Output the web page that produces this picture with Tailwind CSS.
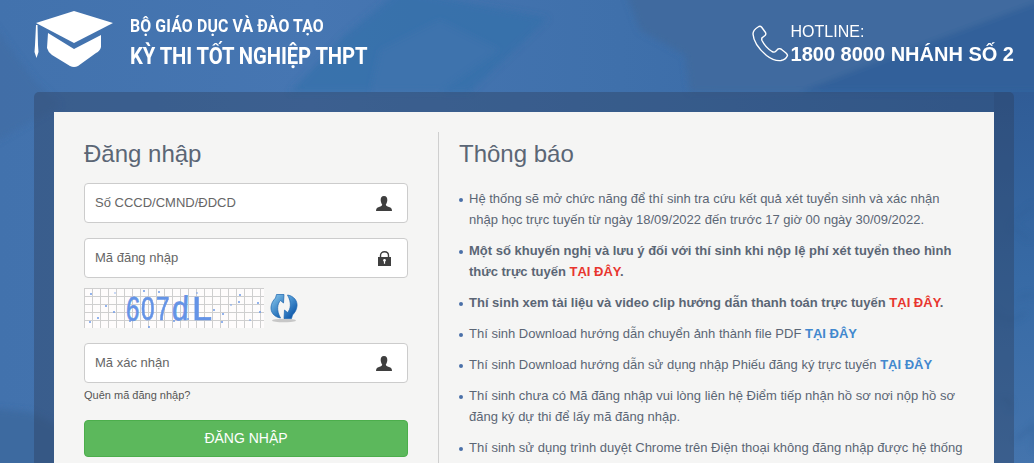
<!DOCTYPE html>
<html lang="en">
  <head>
    <meta charset="UTF-8" />
    <meta name="viewport" content="width=device-width, initial-scale=1.0" />
    <title>Đăng nhập</title>
    <script src="https://cdn.jsdelivr.net/npm/@tailwindcss/browser@4"></script>
  </head>
  <body class="relative h-[463px] overflow-hidden bg-[#4474b0] font-['Liberation_Sans',Arial,sans-serif] text-[#5b6675]">
    <!-- background photo stand-in -->
    <svg class="absolute inset-0 h-full w-full" viewBox="0 0 1034 463" preserveAspectRatio="none">
      <defs>
        <linearGradient id="bg" x1="0" y1="0" x2="1" y2="0">
          <stop offset="0" stop-color="#4272ad" />
          <stop offset="0.3" stop-color="#4676b2" />
          <stop offset="0.6" stop-color="#3f70ab" />
          <stop offset="1" stop-color="#3465a2" />
        </linearGradient>
        <linearGradient id="edge" x1="0" y1="0" x2="0" y2="1">
          <stop offset="0" stop-color="#305c96" />
          <stop offset="0.5" stop-color="#376aa5" />
          <stop offset="1" stop-color="#4474ad" />
        </linearGradient>
        <filter id="soft" x="-10%" y="-10%" width="120%" height="120%"><feGaussianBlur stdDeviation="3" /></filter>
      </defs>
      <rect width="1034" height="463" fill="url(#bg)" />
      <g filter="url(#soft)">
        <path d="M-10 20 L-10 145 L60 105 L34 80Z" fill="#3f6ca4" opacity="0.6" />
        <path d="M400 -10 L548 18 L470 92 L290 92 L345 35Z" fill="#3471aa" opacity="0.7" />
        <path d="M380 50 L440 20 L500 50 L440 92 L370 92Z" fill="#4475af" opacity="0.5" />
        <path d="M625 -10 L1044 -10 L1044 92 L690 92 L685 55 L640 30Z" fill="#3f6a9f" />
        <path d="M800 92 Q880 60 1044 0 L1044 92Z" fill="#33609a" />
        <path d="M-10 408 L30 412 L100 445 L100 473 L-10 473Z" fill="#3e6aa0" />
      </g>
      <rect x="994" y="92" width="40" height="371" fill="url(#edge)" />
      <g fill="none" stroke="#2f5e95" stroke-width="3" opacity="0.5" filter="url(#soft)">
        <path d="M994 310 Q1008 328 1026 312 M1014 220 L1034 205 M1010 225 L1030 240 M1018 300 Q1026 292 1034 296 M1000 400 Q1012 395 1010 410 M1016 440 L1034 425 L1034 450" />
      </g>
    </svg>

    <header class="relative flex h-[92px] items-start justify-between pl-[34px] pr-[20px]">
      <div class="flex items-start">
        <svg class="mt-[11px] h-[57px] w-[80px]" viewBox="0 0 80 57" fill="#fff">
          <path d="M40 0 L79 12 L40 32 L2 12 Z" />
          <path d="M14 22 L40 38 L67 24 L67 36 Q66 40 62 42 L44 55 Q40 57 36 55 L18 44 Q14 41 13 37 Z" />
          <path d="M2 14 L3.500 14 L4 34 L4.500 41 L2.500 47 L0.500 41 L1 34 Z" />
        </svg>
        <div class="ml-[16px] flex origin-left scale-x-[0.88] flex-col whitespace-nowrap font-['Roboto',sans-serif] text-white">
          <span class="mt-[15px] text-[18px] font-bold leading-[22px] tracking-[0.15px]">BỘ GIÁO DỤC VÀ ĐÀO TẠO</span>
          <span class="mt-[6px] text-[23px] font-bold leading-[28px] tracking-[-0.1px]">KỲ THI TỐT NGHIỆP THPT</span>
        </div>
      </div>
      <div class="mt-[23px] flex items-start text-white">
        <svg class="mt-[2px] h-[37px] w-[37px]" viewBox="0 0 37 37" fill="none" stroke="#fff" stroke-width="1.400" stroke-linejoin="round">
          <path d="M6 2 C3.500 3.500 1 5.500 1 9 C1.500 17 8 25 14.500 30.500 C19 34 24 36 29 35.500 C32 35 34.500 33 35.500 30.500 C35.500 29.500 35 29 34 28 L29 24 C28 23.500 27 23.500 26 24 L23.500 26.500 C22.500 27.500 21 27 20 26.500 C16 24 12 19.500 10 15.500 C9.500 14 9.500 13 10.500 12.500 L13 10.500 C14 9.500 14 8.500 13.500 7.500 L9.500 2 C8.500 1 7.500 1 6 2 Z" />
        </svg>
        <div class="ml-[2px] flex flex-col">
          <span class="text-[16px] leading-[18px]">HOTLINE:</span>
          <span class="mt-[1px] text-[20px] font-bold leading-[24px]">1800 8000 NHÁNH SỐ 2</span>
        </div>
      </div>
    </header>

    <main class="relative ml-[34px] mr-[20px] h-[371px] rounded-t-[5px] bg-[#2d3f5d]/40 px-[20px] pt-[20px]">
      <div class="flex h-[351px] bg-[#f5f5f4]">
        <section class="w-[384px] shrink-0 pl-[30px] pr-[30px] pt-[28px]">
          <h2 class="text-[24px] leading-[28px] text-[#5b6675]">Đăng nhập</h2>

          <div class="mt-[15px] flex h-[40px] items-center justify-between rounded-[4px] border border-[#cccccc] bg-white pl-[10px] pr-[15px] text-[13px] text-[#666]">
            <span>Số CCCD/CMND/ĐDCD</span>
            <svg class="h-[15px] w-[16px]" viewBox="0 0 16 15" fill="#3f3f3f"><path d="M8 0 C10.500 0 11.500 2 11.300 4.500 C11.100 6.500 10.300 7.800 9.800 8.600 C9.800 9.800 11 10.300 13 11 C15 11.700 16 12.500 16 15 L0 15 C0 12.500 1 11.700 3 11 C5 10.300 6.200 9.800 6.200 8.600 C5.700 7.800 4.900 6.500 4.700 4.500 C4.500 2 5.500 0 8 0 Z" /></svg>
          </div>

          <div class="mt-[15px] flex h-[40px] items-center justify-between rounded-[4px] border border-[#cccccc] bg-white pl-[10px] pr-[15px] text-[13px] text-[#666]">
            <span>Mã đăng nhập</span>
            <svg class="h-[15px] w-[15px]" viewBox="0 0 15 15"><path d="M3.500 7 V4.500 C3.500 2 5.300 0.700 7.500 0.700 C9.700 0.700 11.500 2 11.500 4.500 V7" fill="none" stroke="#3f3f3f" stroke-width="1.400" /><path fill="#3f3f3f" fill-rule="evenodd" d="M1 6 H14 V15 H1 Z M7.500 8 A1.300 1.300 0 0 0 6.900 10.500 V12.800 H8.100 V10.500 A1.300 1.300 0 0 0 7.500 8 Z" /></svg>
          </div>

          <div class="mt-[10px] flex h-[40px] items-center">
            <div class="relative h-[40px] w-[180px] overflow-hidden bg-[#fefcfc] bg-[linear-gradient(#cfcfcf_1px,transparent_1px),linear-gradient(90deg,#cfcfcf_1px,transparent_1px)] bg-size-[8px_8px]">
              <svg class="absolute inset-0 h-full w-full" viewBox="0 0 180 40" fill="#6f9be8">
                <circle cx="7" cy="6" r="1" /><circle cx="14" cy="30" r="1" /><circle cx="22" cy="18" r="1" /><circle cx="30" cy="24" r="1" /><circle cx="31" cy="5" r="0.700" /><circle cx="46" cy="33" r="1" />
                <circle cx="47" cy="10" r="0.700" /><circle cx="60" cy="3" r="1" /><circle cx="75" cy="4" r="1" /><circle cx="113" cy="5" r="0.800" /><circle cx="138" cy="34" r="1" /><circle cx="130" cy="22" r="1" />
                <circle cx="139" cy="26" r="1" /><circle cx="147" cy="17" r="0.800" /><circle cx="155" cy="14" r="1" /><circle cx="156" cy="7" r="1" /><circle cx="174" cy="15" r="1" /><circle cx="176" cy="24" r="1" />
                <circle cx="90" cy="33" r="1" /><circle cx="104" cy="31" r="1" /><circle cx="120" cy="30" r="1" /><circle cx="65" cy="39" r="1" /><circle cx="6" cy="34" r="1" /><circle cx="166" cy="32" r="0.800" />
              </svg>
              <div class="absolute left-[42px] top-[3px] flex items-baseline text-[34px] leading-[34px] text-[#6493e6] [-webkit-text-stroke:0.7px_#6493e6]">
                <span class="inline-block w-[15px] origin-left scale-x-[0.72] rotate-[4deg]">6</span>
                <span class="inline-block w-[15px] origin-left scale-x-[0.72]">0</span>
                <span class="inline-block w-[16px] origin-left scale-x-[0.72]">7</span>
                <span class="inline-block w-[20px] origin-left scale-x-[0.88] -skew-x-[3deg]">d</span>
                <span class="inline-block origin-left scale-x-[1.06]">L</span>
              </div>
            </div>
            <svg class="ml-[5px] h-[30px] w-[30px]" viewBox="0 0 30 30">
              <defs>
                <linearGradient id="arrowLeft" x1="0" y1="0" x2="0.600" y2="1">
                  <stop offset="0" stop-color="#8fcdf0" />
                  <stop offset="1" stop-color="#1c68b4" />
                </linearGradient>
                <linearGradient id="arrowRight" x1="1" y1="1" x2="0.400" y2="0">
                  <stop offset="0" stop-color="#6db6e8" />
                  <stop offset="1" stop-color="#0d56a8" />
                </linearGradient>
              </defs>
              <ellipse cx="15" cy="27.500" rx="12" ry="1.800" fill="#9a9a9a" opacity="0.5" />
              <path fill="url(#arrowLeft)" stroke="#1a63ad" stroke-width="0.700" d="M7.500 1.500 L15 1.500 L14.500 10 L11.500 7.500 C8.500 10.500 7 17 11.500 25 C5 24 1.500 19 2 14 C2.300 10.500 4 7.500 6.500 5 Z" />
              <path fill="url(#arrowRight)" stroke="#1a63ad" stroke-width="0.700" transform="rotate(180 15 13.500)" d="M7.500 1.500 L15 1.500 L14.500 10 L11.500 7.500 C8.500 10.500 7 17 11.500 25 C5 24 1.500 19 2 14 C2.300 10.500 4 7.500 6.500 5 Z" />
            </svg>
          </div>

          <div class="mt-[15px] flex h-[40px] items-center justify-between rounded-[4px] border border-[#cccccc] bg-white pl-[10px] pr-[15px] text-[13px] text-[#666]">
            <span>Mã xác nhận</span>
            <svg class="h-[15px] w-[16px]" viewBox="0 0 16 15" fill="#3f3f3f"><path d="M8 0 C10.500 0 11.500 2 11.300 4.500 C11.100 6.500 10.300 7.800 9.800 8.600 C9.800 9.800 11 10.300 13 11 C15 11.700 16 12.500 16 15 L0 15 C0 12.500 1 11.700 3 11 C5 10.300 6.200 9.800 6.200 8.600 C5.700 7.800 4.900 6.500 4.700 4.500 C4.500 2 5.500 0 8 0 Z" /></svg>
          </div>
          <a class="mt-[5px] block text-[11px] leading-[14px] text-[#555]">Quên mã đăng nhập?</a>

          <button class="mt-[18px] h-[37px] w-full rounded-[4px] border border-[#4cae4c] bg-[#5cb85c] text-[14px] text-white">ĐĂNG NHẬP</button>
        </section>

        <section class="mt-[20px] flex-1 border-l border-[#cfcfcf] pl-[20px] pr-[26px]">
          <h2 class="text-[24px] leading-[44px] text-[#5b6675]">Thông báo</h2>
          <ul class="mt-[12px] flex flex-col gap-[10px] text-[13px] leading-[21px] text-[#5b6675]">
            <li class="relative pl-[10px] before:absolute before:left-0 before:top-[10px] before:size-[4px] before:rounded-full before:bg-[#4a70a8]">Hệ thống sẽ mở chức năng để thí sinh tra cứu kết quả xét tuyển sinh và xác nhận nhập học trực tuyến từ ngày 18/09/2022 đến trước 17 giờ 00 ngày 30/09/2022.</li>
            <li class="relative pl-[10px] font-bold before:absolute before:left-0 before:top-[10px] before:size-[4px] before:rounded-full before:bg-[#4a70a8]">Một số khuyến nghị và lưu ý đối với thí sinh khi nộp lệ phí xét tuyển theo hình thức trực tuyến <a class="text-[#e8352e]">TẠI ĐÂY</a>.</li>
            <li class="relative pl-[10px] font-bold before:absolute before:left-0 before:top-[10px] before:size-[4px] before:rounded-full before:bg-[#4a70a8]">Thí sinh xem tài liệu và video clip hướng dẫn thanh toán trực tuyến <a class="text-[#e8352e]">TẠI ĐÂY</a>.</li>
            <li class="relative pl-[10px] before:absolute before:left-0 before:top-[10px] before:size-[4px] before:rounded-full before:bg-[#4a70a8]">Thí sinh Download hướng dẫn chuyển ảnh thành file PDF <a class="font-bold text-[#4288ce]">TẠI ĐÂY</a></li>
            <li class="relative pl-[10px] before:absolute before:left-0 before:top-[10px] before:size-[4px] before:rounded-full before:bg-[#4a70a8]">Thí sinh Download hướng dẫn sử dụng nhập Phiếu đăng ký trực tuyến <a class="font-bold text-[#4288ce]">TẠI ĐÂY</a></li>
            <li class="relative pl-[10px] before:absolute before:left-0 before:top-[10px] before:size-[4px] before:rounded-full before:bg-[#4a70a8]">Thí sinh chưa có Mã đăng nhập vui lòng liên hệ Điểm tiếp nhận hồ sơ nơi nộp hồ sơ đăng ký dự thi để lấy mã đăng nhập.</li>
            <li class="relative pl-[10px] before:absolute before:left-0 before:top-[10px] before:size-[4px] before:rounded-full before:bg-[#4a70a8]">Thí sinh sử dụng trình duyệt Chrome trên Điện thoại không đăng nhập được hệ thống</li>
          </ul>
        </section>
      </div>
    </main>
  </body>
</html>
